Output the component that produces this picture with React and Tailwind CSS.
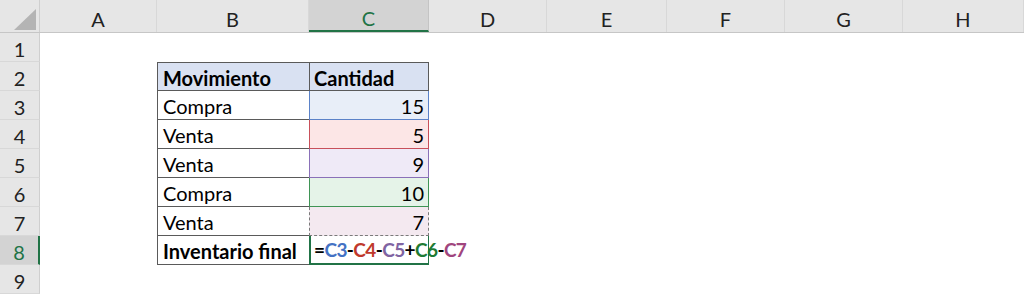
import React from 'react';

const font = { fontFamily: 'Lato, "Open Sans", sans-serif' };

const columns = [
    { key: 'A', w: 'w-[117px]' },
    { key: 'B', w: 'w-[152px]' },
    { key: 'C', w: 'w-[120px]', active: true },
    { key: 'D', w: 'w-[118px]' },
    { key: 'E', w: 'w-[120px]' },
    { key: 'F', w: 'w-[118px]' },
    { key: 'G', w: 'w-[118px]' },
    { key: 'H', w: 'w-[121px]' },
];

const movimientos = [
    { label: 'Compra', qty: 15, cell: 'bg-[#e8eef8] border-[#5b82c8]' },
    { label: 'Venta', qty: 5, cell: 'bg-[#fce6e6] border-[#c8505a]' },
    { label: 'Venta', qty: 9, cell: 'bg-[#efeaf7] border-[#8a70b8]' },
    { label: 'Compra', qty: 10, cell: 'bg-[#e5f3e8] border-[#3f9455]' },
    { label: 'Venta', qty: 7, cell: 'bg-[#f4e9f0] border-[#7a7a7a] border-dashed' },
];

function ColumnHeader() {
    return (
        <div className="flex h-[33px] bg-[#e6e6e6] border-b border-[#c6c6c6]">
            <div className="w-[40px] relative border-r border-[#cfcfcf]">
                <svg className="absolute left-[14px] top-[9px]" width="22" height="21" viewBox="0 0 22 21">
                    <polygon points="22,0 22,21 0,21" fill="#b4b4b4" />
                </svg>
            </div>
            {columns.map((c) => (
                <div
                    key={c.key}
                    className={`${c.w} flex items-center justify-center pt-[5px] text-[20px] ${c.active ? 'bg-[#d3d3d3] text-[#217346] border-b-2 border-[#217346] border-r border-r-[#c4c4c4]' : 'text-[#222] border-r border-[#d8d8d8]'}`}
                >
                    {c.key}
                </div>
            ))}
        </div>
    );
}

function Row({ n, active, children }) {
    return (
        <div className="flex h-[29px]">
            <div
                className={`w-[40px] flex items-center justify-center pt-[3px] text-[20px] border-b border-[#d8d8d8] ${active ? 'bg-[#d3d3d3] text-[#217346] border-r-2 border-r-[#217346]' : 'bg-[#e6e6e6] text-[#222] border-r border-r-[#cfcfcf]'}`}
            >
                {n}
            </div>
            <div className="w-[117px]" />
            {children}
        </div>
    );
}

function App() {
    return (
        <div className="w-[1024px] h-[294px] overflow-hidden bg-white text-[20px] text-black" style={font}>
            <ColumnHeader />

            <Row n={1} />

            <Row n={2}>
                <div className="w-[152px] bg-[#d9e1f2] border border-r-0 border-[#5a5a5a] pl-[5px] pt-[2px] flex items-center font-bold">
                    Movimiento
                </div>
                <div className="w-[120px] bg-[#d9e1f2] border border-[#5a5a5a] pl-[4px] pt-[2px] flex items-center font-bold">
                    Cantidad
                </div>
            </Row>

            {movimientos.map((m, i) => (
                <Row key={i} n={i + 3}>
                    <div className="w-[152px] border-l border-b border-[#5a5a5a] pl-[5px] pt-[2px] flex items-center">
                        {m.label}
                    </div>
                    <div className={`w-[120px] border-l border-r border-b ${m.cell} pr-[4px] pt-[2px] flex items-center justify-end`}>
                        {m.qty}
                    </div>
                </Row>
            ))}

            <Row n={8} active>
                <div className="w-[152px] border-l border-b border-[#5a5a5a] pl-[5px] pt-[2px] flex items-center font-bold">
                    Inventario final
                </div>
                <div className="w-[120px] border-l-2 border-b-2 border-r border-[#217346] pl-[3px] pt-[2px] flex items-center font-bold text-[19px] tracking-[-0.6px] whitespace-nowrap overflow-visible relative z-10">
                    <span>=</span>
                    <span className="text-[#4472c4]">C3</span>
                    <span>-</span>
                    <span className="text-[#c0392b]">C4</span>
                    <span>-</span>
                    <span className="text-[#8064a2]">C5</span>
                    <span>+</span>
                    <span className="text-[#1e7b34]">C6</span>
                    <span>-</span>
                    <span className="text-[#a0457e]">C7</span>
                </div>
            </Row>

            <Row n={9} />
        </div>
    );
}

export default App;
